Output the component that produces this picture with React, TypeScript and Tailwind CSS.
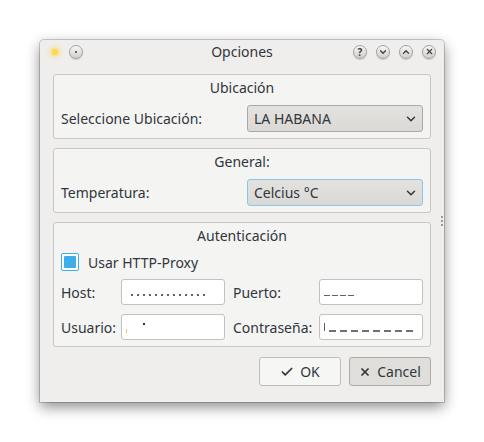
import { Check, ChevronDown, ChevronUp, X } from "lucide-react";

function TitleButton({ children }: { children?: React.ReactNode }) {
  return (
    <div className="flex h-[14px] w-[14px] items-center justify-center rounded-full border border-[#a3a2a0] bg-[linear-gradient(#f7f7f6,#cfcecc)] text-[#3b3e42] shadow-[0_1px_1px_rgba(0,0,0,0.15)]">
      {children}
    </div>
  );
}

function GroupBox({ title, children }: { title: string; children: React.ReactNode }) {
  return (
    <div className="rounded-[3px] border border-[#c8c7c5] bg-[#f4f4f3] px-[7px] pb-[6px] pt-[4px]">
      <div className="h-[18px] text-center leading-[18px]">{title}</div>
      {children}
    </div>
  );
}

function Combo({ value, focus }: { value: string; focus?: boolean }) {
  return (
    <div
      className={
        "flex h-[27px] w-[176px] items-center justify-between rounded-[3px] border bg-[linear-gradient(#e4e2df,#dbd9d6)] pl-[6px] pr-[4px] " +
        (focus ? "border-[#85c8ea]" : "border-[#aba9a6]")
      }
    >
      <span>{value}</span>
      <ChevronDown size={14} strokeWidth={2.5} />
    </div>
  );
}

function Field({ children }: { children?: React.ReactNode }) {
  return (
    <div className="relative flex h-[26px] w-[104px] items-center rounded-[3px] border border-[#c3c2c0] bg-white px-[4px]">
      {children}
    </div>
  );
}

export default function App() {
  return (
    <div className="h-[442px] w-[484px] bg-white pl-[40px] pt-[40px] font-['Noto_Sans',sans-serif] text-[14px] text-[#31363b]">
      <div className="relative flex h-[362px] w-[404px] flex-col rounded-t-[4px] bg-[#efeeec] shadow-[0_0_0_1px_rgba(0,0,0,0.18),0_5px_14px_rgba(0,0,0,0.45)]">
        <div className="grid h-[23px] grid-cols-[1fr_auto_1fr] items-center">
          <div className="flex items-center pl-[12px]">
            <div className="h-[6px] w-[6px] rounded-full bg-[#ffd84a] shadow-[0_0_4px_2px_rgba(255,210,60,0.6)]" />
            <div className="ml-[11px]">
              <TitleButton>
                <div className="h-[2px] w-[2px] rounded-full bg-[#3b3e42]" />
              </TitleButton>
            </div>
          </div>
          <div className="leading-none">Opciones</div>
          <div className="flex items-center justify-end gap-[9px] pr-[8px]">
            <TitleButton>
              <span className="text-[10px] font-bold leading-none">?</span>
            </TitleButton>
            <TitleButton>
              <ChevronDown size={10} strokeWidth={3} />
            </TitleButton>
            <TitleButton>
              <ChevronUp size={10} strokeWidth={3} />
            </TitleButton>
            <TitleButton>
              <X size={9} strokeWidth={3} />
            </TitleButton>
          </div>
        </div>

        <div className="flex flex-1 flex-col gap-[9px] px-[13px] pt-[11px]">
          <GroupBox title="Ubicación">
            <div className="mt-[8px] flex items-center justify-between">
              <span>Seleccione Ubicación:</span>
              <Combo value="LA HABANA" />
            </div>
          </GroupBox>

          <GroupBox title="General:">
            <div className="mt-[8px] flex items-center justify-between">
              <span>Temperatura:</span>
              <Combo value="Celcius °C" focus />
            </div>
          </GroupBox>

          <GroupBox title="Autenticación">
            <div className="mt-[8px] flex h-[18px] items-center gap-[9px]">
              <div className="h-[18px] w-[18px] rounded-[2px] border border-[#3daee9] bg-white p-[2px]">
                <div className="h-full w-full rounded-[1px] bg-[#3daee9]" />
              </div>
              <span>Usar HTTP-Proxy</span>
            </div>
            <div className="mt-[8px] flex items-center">
              <span className="w-[60px]">Host:</span>
              <Field>
                <div className="ml-[5px] mt-[6px] h-[2px] w-[75px] bg-[repeating-linear-gradient(90deg,#5b6168_0_2px,transparent_2px_6px)]" />
              </Field>
              <span className="ml-[8px] w-[86px]">Puerto:</span>
              <Field>
                <div className="mt-[6px] h-[1px] w-[32px] bg-[repeating-linear-gradient(90deg,#5b6168_0_6px,transparent_6px_8px)]" />
              </Field>
            </div>
            <div className="mt-[9px] flex items-center">
              <span className="w-[60px]">Usuario:</span>
              <Field>
                <div className="mt-[8px] h-[4px] w-[1px] bg-[#f2c14e]" />
                <div className="mb-[6px] ml-[16px] h-[2px] w-[2px] bg-[#31363b]" />
              </Field>
              <span className="ml-[8px] w-[86px]">Contraseña:</span>
              <Field>
                <div className="h-[8px] w-[1px] bg-[#5b6168]" />
                <div className="ml-[4px] mt-[8px] h-[2px] w-[88px] bg-[repeating-linear-gradient(90deg,#6b7178_0_7px,transparent_7px_11px)]" />
              </Field>
            </div>
          </GroupBox>

          <div className="mt-[1px] flex justify-end gap-[8px]">
            <button className="flex h-[29px] w-[82px] items-center justify-center gap-[6px] rounded-[3px] border border-[#bebdbb] bg-[#f6f6f5]">
              <Check size={14} strokeWidth={3} />
              <span>OK</span>
            </button>
            <button className="flex h-[29px] w-[82px] items-center justify-center gap-[6px] rounded-[3px] border border-[#acaaa7] bg-[#e0dedb]">
              <X size={12} strokeWidth={3.5} />
              <span>Cancel</span>
            </button>
          </div>
        </div>

        <div className="absolute right-[1px] top-[176px] flex flex-col gap-[2px]">
          <div className="h-[2px] w-[2px] bg-[#9a9997]" />
          <div className="h-[2px] w-[2px] bg-[#9a9997]" />
          <div className="h-[2px] w-[2px] bg-[#9a9997]" />
        </div>
      </div>
    </div>
  );
}
